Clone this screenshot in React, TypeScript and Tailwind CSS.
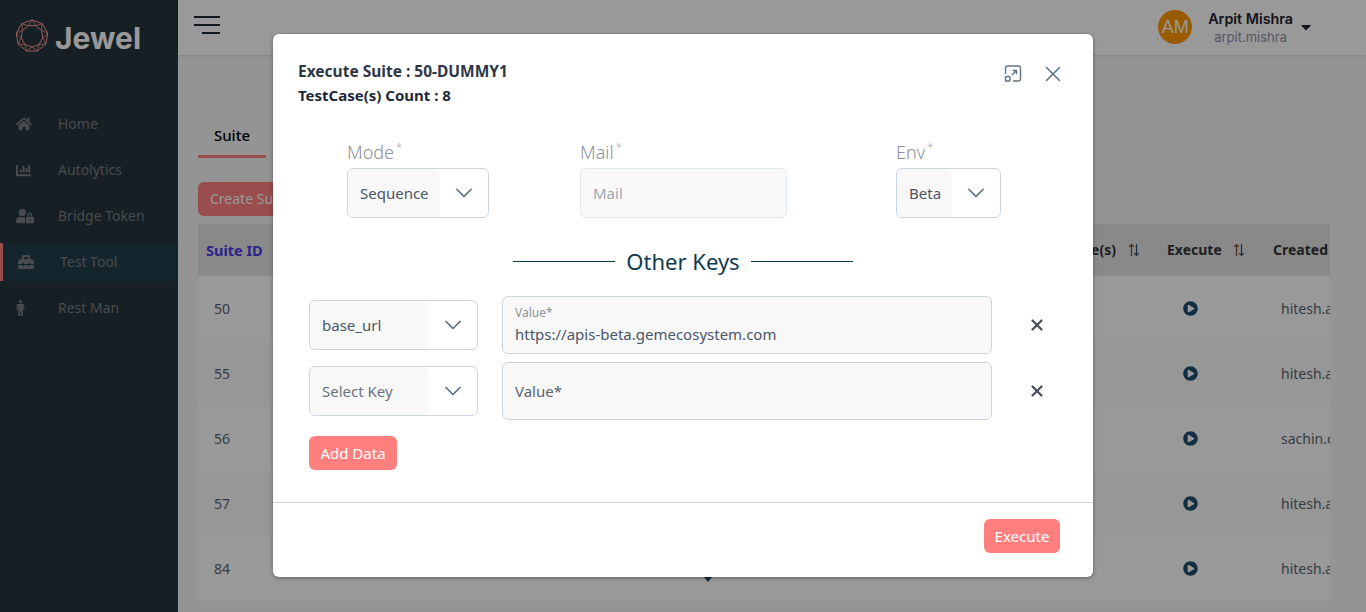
import React from "react";
import { FaHome, FaChartBar, FaUserLock, FaToolbox, FaPlayCircle, FaCaretDown } from "react-icons/fa";
import { ChevronDown, X } from "lucide-react";

function ManGlyph() {
  return (
    <svg className="h-4 w-[9px]" viewBox="0 0 9 16" fill="currentColor" aria-hidden="true">
      <circle cx="4.5" cy="1.7" r="1.6" />
      <path d="M1.8 4h5.4a1.2 1.2 0 0 1 1.2 1.2V10H7.2V6h-.4v10H5v-5H4v5H2.2V6h-.4v4H.6V5.2A1.2 1.2 0 0 1 1.8 4Z" />
    </svg>
  );
}

const navItems = [
  { label: "Home", icon: <FaHome size={16} /> },
  { label: "Autolytics", icon: <FaChartBar size={15} /> },
  { label: "Bridge Token", icon: <FaUserLock size={18} /> },
  { label: "Test Tool", icon: <FaToolbox size={16} />, active: true },
  { label: "Rest Man", icon: <ManGlyph /> },
];

const rows = [
  { id: "50", by: "hitesh.agrawal" },
  { id: "55", by: "hitesh.agrawal" },
  { id: "56", by: "sachin.chauhan" },
  { id: "57", by: "hitesh.agrawal" },
  { id: "84", by: "hitesh.agrawal" },
];

function ringPoints(radius: number, offset: number) {
  return Array.from({ length: 9 }, (_, i) => {
    const a = ((offset + i * 40) * Math.PI) / 180;
    return [17 + radius * Math.cos(a), 17 + radius * Math.sin(a)];
  });
}

function JewelLogo() {
  const outer = ringPoints(16, -90);
  const inner = ringPoints(11, -70);
  const toStr = (pts: number[][]) => pts.map((p) => p.join(",")).join(" ");
  const zigzag = outer.flatMap((p, i) => [p, inner[i]]);
  return (
    <svg className="h-[34px] w-[34px] shrink-0" viewBox="0 0 34 34" fill="none" stroke="#ff9a9a" strokeWidth="1" aria-hidden="true">
      <polygon points={toStr(outer)} />
      <polygon points={toStr(inner)} />
      <polygon points={toStr(zigzag)} strokeWidth="0.8" />
    </svg>
  );
}

function SortGlyph() {
  return (
    <svg className="h-[14px] w-[12px]" viewBox="0 0 12 14" fill="none" strokeWidth="1.2" aria-hidden="true">
      <path d="M3.5 13V1.5M1.2 3.8l2.3-2.3 2.3 2.3" stroke="#7a4a2a" />
      <path d="M8.5 1v11.5M6.2 10.2l2.3 2.3 2.3-2.3" stroke="#24506e" />
    </svg>
  );
}

function ExpandGlyph() {
  return (
    <svg className="h-[18px] w-[18px]" viewBox="0 0 18 18" fill="none" stroke="#5f7488" strokeWidth="1.4" aria-hidden="true">
      <path d="M1.5 9V3a2 2 0 0 1 2-2h11a2 2 0 0 1 2 2v11a2 2 0 0 1-2 2H9" />
      <rect x="1.5" y="11.5" width="4.5" height="4.5" rx="0.8" />
      <path d="M8 10l4.5-4.5M8.8 5.5h3.7v3.7" />
    </svg>
  );
}

function SelectBox({ value, width, innerWidth, muted }: { value: string; width: string; innerWidth: string; muted?: boolean }) {
  return (
    <div className={`flex h-[50px] items-stretch rounded-md border border-[#cbd5e0] bg-white ${width}`}>
      <div className={`flex items-center rounded-md bg-[#f8f8f8] pl-3 text-[15px] ${innerWidth} ${muted ? "text-[#6b7280]" : "text-[#4a5568]"}`}>{value}</div>
      <div className="flex flex-1 items-center justify-center text-[#5f6f80]">
        <ChevronDown size={28} strokeWidth={1.5} />
      </div>
    </div>
  );
}

function FieldLabel({ children }: { children: React.ReactNode }) {
  return (
    <div className="mb-[6px] h-[20px] text-[18px] font-light leading-[20px] text-[#8f8f9a]">
      {children}
      <sup className="ml-[2px] inline-block -translate-y-[3px] text-[11px] text-[#a0a0a8]">*</sup>
    </div>
  );
}

export default function App() {
  return (
    <div className="relative flex h-[612px] w-[1366px] overflow-hidden bg-[#f7f7f7] font-['Noto_Sans',sans-serif]">
      <aside className="flex w-[178px] shrink-0 flex-col bg-[#26343b]">
        <div className="flex h-[105px] items-start gap-[6px] pl-[15px] pt-[19px]">
          <JewelLogo />
          <span className="font-['Inter',sans-serif] text-[30px] font-bold leading-[38px] text-white">Jewel</span>
        </div>
        <nav className="flex flex-col gap-2">
          {navItems.map((item) => (
            <div
              key={item.label}
              className={`flex h-[38px] items-center text-sm text-[#7a7f84] ${item.active ? "border-l-[3px] border-[#ff8080] bg-[#233e4b] pl-[15px]" : "pl-4"}`}
            >
              <span className="flex w-[18px] justify-start">{item.icon}</span>
              <span className="ml-6">{item.label}</span>
            </div>
          ))}
        </nav>
      </aside>

      <main className="flex min-w-0 flex-1 flex-col">
        <header className="flex h-[55px] shrink-0 items-center justify-between bg-white pl-4 pr-[52px] shadow-sm">
          <div className="mb-[5px] flex w-[26px] flex-col items-end gap-[6px]">
            <span className="h-[2px] w-full bg-[#1f2937]" />
            <span className="h-[2px] w-full bg-[#1f2937]" />
            <span className="h-[2px] w-[18px] bg-[#1f2937]" />
          </div>
          <div className="flex items-center">
            <div className="-mt-px flex h-[34px] w-[34px] items-center justify-center rounded-full bg-[#ff9800] font-['Liberation_Sans',sans-serif] text-[18px] text-white">AM</div>
            <div className="ml-4 flex flex-col items-center font-['Inter',sans-serif]">
              <span className="text-[14.3px] font-semibold leading-[18px] text-[#1f2430]">Arpit Mishra</span>
              <span className="text-[13px] leading-[18px] text-[#8d8fa5]">arpit.mishra</span>
            </div>
            <FaCaretDown size={16} className="ml-[5px] mt-[-1px] text-[#1f2430]" />
          </div>
        </header>

        <section className="min-h-0 flex-1 px-5">
          <div className="mt-[62px] flex">
            <div className="flex h-[41px] w-[68px] items-start justify-center border-b-[3px] border-[#ff8080] pt-[6px] text-[15px] font-medium leading-[24px] text-black">Suite</div>
          </div>
          <button type="button" className="mt-[24px] block h-[34px] rounded-md bg-[#ff8080] px-3 text-sm text-white">
            Create Suite
          </button>
          <div className="mt-2 w-[1132px] overflow-hidden">
            <table className="w-[1300px] table-fixed border-collapse text-left text-sm">
              <colgroup>
                <col className="w-[100px]" />
                <col className="w-[420px]" />
                <col className="w-[441px]" />
                <col className="w-[106px]" />
                <col className="w-[233px]" />
              </colgroup>
              <thead>
                <tr className="h-[52px] bg-[#e4e4e6] text-[#333] [&>th]:font-bold">
                  <th className="pl-2 text-[14.5px] text-[#4b3ae9]">Suite ID</th>
                  <th className="pl-2">Suite Name</th>
                  <th className="pr-[19px]">
                    <div className="flex items-center justify-end gap-3">
                      Testcase(s) <SortGlyph />
                    </div>
                  </th>
                  <th className="pl-2">
                    <div className="flex items-center gap-[11px]">
                      Execute <SortGlyph />
                    </div>
                  </th>
                  <th className="pl-2">Created By</th>
                </tr>
              </thead>
              <tbody>
                {rows.map((row) => (
                  <tr key={row.id} className="h-[65px] bg-white text-[#5a6473] even:bg-[#fcfcfc]">
                    <td className="pl-4">{row.id}</td>
                    <td className="pl-4">DUMMY</td>
                    <td className="pl-4">8</td>
                    <td className="pl-6 text-[#1f4e70]">
                      <FaPlayCircle size={15} />
                    </td>
                    <td className="pl-4">{row.by}</td>
                  </tr>
                ))}
              </tbody>
            </table>
          </div>
        </section>
      </main>

      <div className="absolute inset-0 bg-black/40" />

      {/* sliver of row content that shows under the dialog's bottom edge */}
      <div className="absolute left-[704px] top-[577px] h-0 w-0 border-x-[4px] border-t-[5px] border-x-transparent border-t-[#0f2c40]" />

      <div role="dialog" className="absolute left-[273px] top-[34px] flex h-[543px] w-[820px] flex-col rounded-md bg-white shadow-[0_1px_4px_rgba(0,0,0,0.35)]">
        <div className="flex justify-between pl-[25px] pr-[30px] pt-[25px]">
          <div className="font-bold leading-[24px] text-[#2d3748]">
            <div className="text-[15.5px]">Execute Suite : 50-DUMMY1</div>
            <div className="text-[15px] text-[#1f2937]">TestCase(s) Count : 8</div>
          </div>
          <div className="flex items-start gap-[21px] pt-[6px] text-[#5f7488]">
            <ExpandGlyph />
            <X size={26} strokeWidth={1.4} className="-mx-[3px] -mt-1" />
          </div>
        </div>

        <div className="mt-[35px] flex items-start pl-[74px]">
          <div>
            <FieldLabel>Mode</FieldLabel>
            <SelectBox value="Sequence" width="w-[142px]" innerWidth="w-[92px]" />
          </div>
          <div className="ml-[91px]">
            <FieldLabel>Mail</FieldLabel>
            <div className="flex h-[50px] w-[207px] items-center rounded-md border border-[#e2e8f0] bg-[#f9f9f9] pl-3 text-[15px] text-[#a0a6b0]">Mail</div>
          </div>
          <div className="ml-[109px]">
            <FieldLabel>Env</FieldLabel>
            <SelectBox value="Beta" width="w-[105px]" innerWidth="w-[55px]" />
          </div>
        </div>

        <div className="mt-[26px] flex items-center justify-center gap-[11px] text-[#0f3a52]">
          <span className="h-px w-[102px] bg-[#0f3a52]" />
          <span className="text-[22px] leading-[34px]">Other Keys</span>
          <span className="h-px w-[102px] bg-[#0f3a52]" />
        </div>

        <div className="mt-[18px] flex flex-col gap-2 pl-9">
          <div className="flex items-center">
            <SelectBox value="base_url" width="w-[169px]" innerWidth="w-[119px]" />
            <div className="ml-6 flex h-[58px] w-[490px] flex-col justify-center rounded-md border border-[#cbd5e0] bg-[#f8f8f8] pl-3 pt-px">
              <span className="text-xs leading-[14px] text-[#8f8f96]">Value*</span>
              <span className="mt-[3px] text-[15px] leading-[22px] text-[#4a5568]">https://apis-beta.gemecosystem.com</span>
            </div>
            <X size={18} strokeWidth={3} className="ml-9 text-[#4a5058]" />
          </div>
          <div className="flex items-center">
            <SelectBox value="Select Key" width="w-[169px]" innerWidth="w-[119px]" muted />
            <div className="ml-6 flex h-[58px] w-[490px] items-center rounded-md border border-[#cbd5e0] bg-[#f8f8f8] pl-3 text-[15px] text-[#5a6473]">Value*</div>
            <X size={18} strokeWidth={3} className="ml-9 text-[#4a5058]" />
          </div>
        </div>

        <div className="mt-4 pl-9">
          <button type="button" className="h-[34px] w-[88px] rounded-md bg-[#ff7f7f] text-[15px] text-white">
            Add Data
          </button>
        </div>

        <div className="mt-8 flex flex-1 items-start justify-end border-t border-[#cbd5e0] pr-[33px] pt-4">
          <button type="button" className="h-[34px] w-[76px] rounded-md bg-[#ff7f7f] text-[15px] text-white">
            Execute
          </button>
        </div>
      </div>
    </div>
  );
}
